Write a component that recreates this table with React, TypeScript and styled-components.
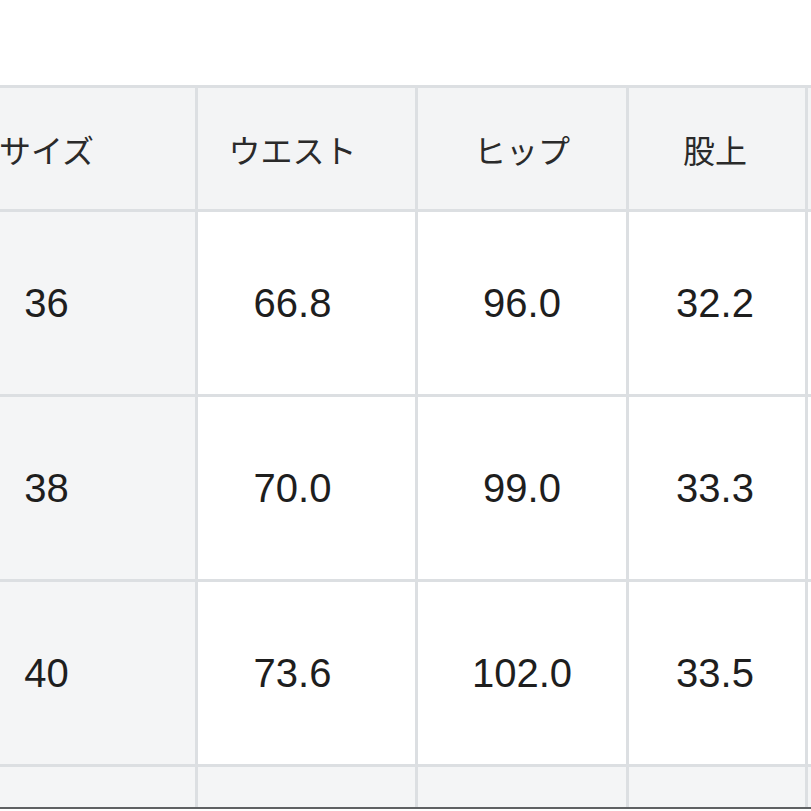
import styled, { createGlobalStyle } from "styled-components";

const GlobalStyle = createGlobalStyle`
  html, body {
    margin: 0;
    padding: 0;
    background: #ffffff;
  }
`;

const Page = styled.div`
  width: 811px;
  height: 809px;
  overflow: hidden;
  padding-top: 85px;
  box-sizing: border-box;
  border-bottom: 2px solid #5f6163;
  background: #ffffff;
`;

const Table = styled.table`
  margin-left: -105px;
  border-collapse: collapse;
  table-layout: fixed;
  width: 1310px;
  border: 3px solid #dcdfe2;
`;

const HeadCell = styled.th<{ $shift?: number }>`
  height: 121px;
  padding: 0 ${(p) => p.$shift || 0}px 0 0;
  background: #f3f4f5;
  border: 3px solid #dcdfe2;
  font-family: "Noto Sans CJK JP", "Noto Sans", sans-serif;
  font-size: 32px;
  font-weight: 400;
  color: #2a2a2a;
  text-align: center;
  vertical-align: middle;
`;

const Cell = styled.td<{ $label?: boolean; $shift?: number }>`
  height: 182px;
  padding: 0 ${(p) => p.$shift || 0}px 0 0;
  background: ${(p) => (p.$label ? "#f4f5f6" : "#ffffff")};
  border: 3px solid #dcdfe2;
  font-family: "Liberation Sans", Arial, sans-serif;
  font-size: 40px;
  color: #1e1e1e;
  text-align: center;
  vertical-align: middle;
`;

const TailCell = styled.td`
  height: 60px;
  background: #f4f5f6;
  border: 3px solid #dcdfe2;
`;

// the fifth column lies past the right edge; only its border shows
const headers = ["サイズ", "ウエスト", "ヒップ", "股上", ""];

const rows = [
  ["36", "66.8", "96.0", "32.2", ""],
  ["38", "70.0", "99.0", "33.3", ""],
  ["40", "73.6", "102.0", "33.5", ""],
];

const widths = [300, 220, 211, 179, 400];
const shifts = [0, 28, 0, 4, 0];

function App() {
  return (
    <>
      <GlobalStyle />
      <Page>
        <Table>
          <colgroup>
            {widths.map((w, i) => (
              <col key={i} style={{ width: w }} />
            ))}
          </colgroup>
          <thead>
            <tr>
              {headers.map((h, i) => (
                <HeadCell key={i} $shift={shifts[i]}>
                  {h}
                </HeadCell>
              ))}
            </tr>
          </thead>
          <tbody>
            {rows.map((row) => (
              <tr key={row[0]}>
                {row.map((v, i) => (
                  <Cell key={i} $label={i === 0} $shift={shifts[i]}>
                    {v}
                  </Cell>
                ))}
              </tr>
            ))}
            <tr>
              {headers.map((_, i) => (
                <TailCell key={i} />
              ))}
            </tr>
          </tbody>
        </Table>
      </Page>
    </>
  );
}

export default App;
